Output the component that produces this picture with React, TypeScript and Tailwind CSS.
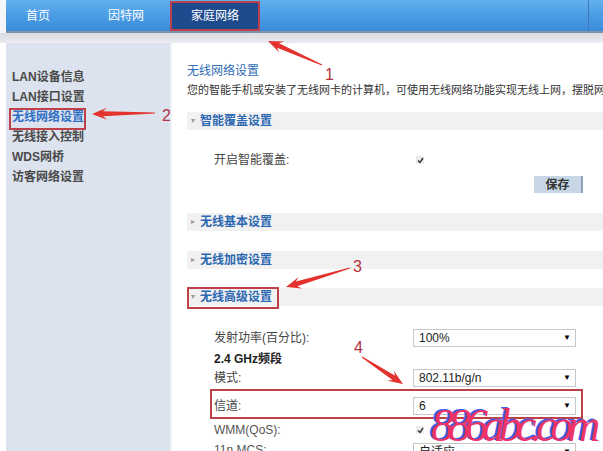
import React from "react";

const CJK = '"Liberation Sans", "Noto Sans CJK SC", sans-serif';

function arrowPoints(tx: number, ty: number, px: number, py: number, headLen = 15, headW = 12, shaftW = 5) {
  const dx = px - tx, dy = py - ty;
  const len = Math.hypot(dx, dy);
  const ux = dx / len, uy = dy / len;
  const nx = -uy, ny = ux;
  const bx = px - ux * headLen, by = py - uy * headLen;
  const nbx = px - ux * (headLen - 4), nby = py - uy * (headLen - 4);
  const pts = [
    [tx + nx * 0.5, ty + ny * 0.5],
    [nbx + nx * shaftW / 2, nby + ny * shaftW / 2],
    [bx + nx * headW / 2, by + ny * headW / 2],
    [px, py],
    [bx - nx * headW / 2, by - ny * headW / 2],
    [nbx - nx * shaftW / 2, nby - ny * shaftW / 2],
    [tx - nx * 0.5, ty - ny * 0.5],
  ];
  return pts.map((p) => p.join(",")).join(" ");
}

function SectionHeader({ label, open }: { label: string; open: boolean }) {
  return (
    <div className="h-[18px] bg-[#f1f1f1] flex items-center pl-[4px]">
      <span className="text-[8px] text-[#999] w-[9px]">{open ? "▾" : "▸"}</span>
      <span className="text-[12px] font-bold text-[#2c68b2] leading-none">{label}</span>
    </div>
  );
}

function Select({ value }: { value: string }) {
  return (
    <div className="w-[163px] h-[18px] shrink-0 border border-[#c8c8c8] bg-white flex items-center justify-between pl-[5px] pr-[4px] text-[12px] text-[#222]">
      <span style={{ fontFamily: CJK }}>{value}</span>
      <span className="text-[8px] text-black">▼</span>
    </div>
  );
}

function Check() {
  return (
    <div className="w-[8px] h-[8px] bg-[#ececec] flex items-center justify-center">
      <svg width="7" height="7" viewBox="0 0 7 7">
        <path d="M1 3.5 L3 5.5 L6 1" stroke="#333" strokeWidth="1.4" fill="none" />
      </svg>
    </div>
  );
}

export default function App() {
  const sidebar = ["LAN设备信息", "LAN接口设置", "无线网络设置", "无线接入控制", "WDS网桥", "访客网络设置"];
  return (
    <div className="relative w-[603px] h-[451px] overflow-hidden bg-white" style={{ fontFamily: CJK }}>
      {/* top bar */}
      <div className="flex h-[33px]">
        <div className="w-[6px] bg-[#f4f6f9]" />
        <div className="flex-1 flex bg-gradient-to-b from-[#64b0ee] via-[#4a9ce5] to-[#3c8bd8] border-b-2 border-[#7c93ab]">
          <div className="w-[64px] flex items-center justify-center text-white text-[12px]">首页</div>
          <div className="ml-[16px] w-[80px] flex items-center justify-center text-white text-[12px]">因特网</div>
          <div className="ml-[4px] mt-[1px] w-[90px] flex items-center justify-center text-white text-[12px] bg-[#1e4b8e] border-2 border-[#b9404c]">家庭网络</div>
          <div className="flex-1" />
          <div className="w-[1px] bg-[#3a78b8]" />
          <div className="w-[14px]" />
        </div>
      </div>
      <div className="h-[10px] bg-gradient-to-b from-[#d9dbe2] to-[#ecedf2]" />
      <div className="flex">
        <div className="w-[6px] shrink-0" />
        <div className="w-[166px] shrink-0 h-[410px] bg-[#dce3ee] pt-[24px] pl-[6px] border-r-2 border-[#eef1f6]">
          {sidebar.map((s, i) => (
            <div
              key={s}
              className={`h-[20px] flex items-center text-[12px] font-semibold ${i === 2 ? "text-[#2f6fc4]" : "text-[#4a4a4a]"}`}
            >
              {s}
            </div>
          ))}
        </div>
        <div className="flex-1 min-w-0 overflow-hidden pl-[15px] pt-[20px]">
          <div className="text-[12px] leading-[16px] text-[#2f6db5]">无线网络设置</div>
          <div className="mt-[3px] text-[11px] leading-[16px] text-[#333] whitespace-nowrap">
            您的智能手机或安装了无线网卡的计算机，可使用无线网络功能实现无线上网，摆脱网线的束缚。
          </div>
          <div className="mt-[14px]">
            <SectionHeader label="智能覆盖设置" open />
          </div>
          <div className="mt-[22px] flex items-center h-[16px] pl-[27px]">
            <div className="w-[202px] shrink-0 text-[12px] text-[#444]">开启智能覆盖:</div>
            <Check />
          </div>
          <div className="mt-[8px] flex justify-end pr-[20px]">
            <div className="w-[49px] h-[17px] bg-[#c6d6e5] border-r-2 border-[#8ea4b8] flex items-center justify-center text-[12px] font-bold text-[#333]">
              保存
            </div>
          </div>
          <div className="mt-[20px]">
            <SectionHeader label="无线基本设置" open={false} />
          </div>
          <div className="mt-[20px]">
            <SectionHeader label="无线加密设置" open={false} />
          </div>
          <div className="mt-[19px]">
            <SectionHeader label="无线高级设置" open />
          </div>
          <div className="pl-[27px]">
            <div className="mt-[23px] flex items-center">
              <div className="w-[199px] shrink-0 text-[12px] text-[#444]">发射功率(百分比):</div>
              <Select value="100%" />
            </div>
            <div className="mt-[4px] h-[16px] text-[12px] font-bold text-[#222] leading-[16px]">2.4 GHz频段</div>
            <div className="mt-[2px] flex items-center">
              <div className="w-[199px] shrink-0 text-[12px] text-[#444]">模式:</div>
              <Select value="802.11b/g/n" />
            </div>
            <div className="mt-[10px] flex items-center">
              <div className="w-[199px] shrink-0 text-[12px] text-[#444]">信道:</div>
              <Select value="6" />
            </div>
            <div className="mt-[7px] flex items-center h-[16px]">
              <div className="w-[202px] shrink-0 text-[12px] text-[#555]">WMM(QoS):</div>
              <Check />
            </div>
            <div className="mt-[5px] flex items-start">
              <div className="w-[199px] shrink-0 text-[12px] text-[#555] leading-[14px]">11n MCS:</div>
              <Select value="自适应" />
            </div>
          </div>
        </div>
      </div>

      {/* annotation boxes */}
      <div className="absolute left-[9px] top-[108px] w-[77px] h-[22px] border-2 border-[#c0404a]" />
      <div className="absolute left-[187px] top-[287px] w-[92px] h-[22px] border-2 border-[#c0404a]" />
      <div className="absolute left-[210px] top-[389px] w-[373px] h-[30px] border-2 border-[#c0404a]" />

      {/* arrows */}
      <svg className="absolute left-0 top-0" width="603" height="451">
        <polygon points={arrowPoints(322, 65, 268, 41)} fill="#e4332f" />
        <polygon points={arrowPoints(155, 113, 92, 114)} fill="#e4332f" />
        <polygon points={arrowPoints(350, 268, 286, 287)} fill="#e4332f" />
        <polygon points={arrowPoints(362, 357, 403, 384)} fill="#e4332f" />
      </svg>
      <div className="absolute left-[325px] top-[63px] text-[16px] text-[#b3323e]" style={{ fontFamily: '"Liberation Sans", sans-serif' }}>1</div>
      <div className="absolute left-[162px] top-[104px] text-[16px] text-[#b3323e]" style={{ fontFamily: '"Liberation Sans", sans-serif' }}>2</div>
      <div className="absolute left-[353px] top-[255px] text-[16px] text-[#b3323e]" style={{ fontFamily: '"Liberation Sans", sans-serif' }}>3</div>
      <div className="absolute left-[354px] top-[336px] text-[16px] text-[#b3323e]" style={{ fontFamily: '"Liberation Sans", sans-serif' }}>4</div>

      {/* watermark */}
      <div
        className="absolute left-[431px] top-[403px] text-[46px] italic leading-none tracking-[-6px] text-[#ee3366]"
        style={{ fontFamily: '"Liberation Serif", serif', textShadow: "-2px -1px 0 #3b5ef0" }}
      >
        886abc.com
      </div>
    </div>
  );
}
